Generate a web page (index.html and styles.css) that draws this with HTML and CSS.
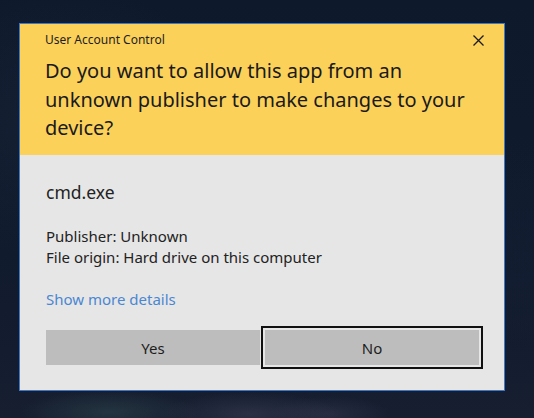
FILE: index.html
```html
<!DOCTYPE html>
<html lang="en">
<head>
<meta charset="utf-8">
<title>User Account Control</title>
<link rel="stylesheet" href="styles.css">
</head>
<body>
<div class="desktop">
  <div class="dialog">
    <div class="header">
      <div class="title-row">
        <span class="title">User Account Control</span>
        <svg class="close" width="11" height="11" viewBox="0 0 11 11" aria-hidden="true">
          <path d="M0.5 0.5 L10.5 10.5 M10.5 0.5 L0.5 10.5" stroke="#1a1a1a" stroke-width="1.3" fill="none"/>
        </svg>
      </div>
      <h1 class="question">Do you want to allow this app from an unknown publisher to make changes to your device?</h1>
    </div>
    <div class="body">
      <div class="app-name">cmd.exe</div>
      <div class="info">
        <div>Publisher: Unknown</div>
        <div>File origin: Hard drive on this computer</div>
      </div>
      <a class="details" href="#">Show more details</a>
      <div class="buttons">
        <button class="btn">Yes</button>
        <button class="btn btn-focus">No</button>
      </div>
    </div>
  </div>
</div>
</body>
</html>
```
FILE: styles.css
```css
html, body {
  margin: 0;
  padding: 0;
}
body {
  width: 534px;
  height: 418px;
  overflow: hidden;
  font-family: "Noto Sans", "Open Sans", sans-serif;
}
.desktop {
  width: 534px;
  height: 418px;
  padding: 23px 0 0 19px;
  box-sizing: border-box;
  background:
    radial-gradient(ellipse 90px 22px at 110px 412px, rgba(50, 75, 80, 0.5), transparent),
    radial-gradient(ellipse 90px 22px at 250px 414px, rgba(70, 70, 95, 0.45), transparent),
    radial-gradient(ellipse 60px 18px at 330px 414px, rgba(65, 65, 90, 0.4), transparent),
    radial-gradient(ellipse 160px 140px at 60px 120px, rgba(28, 38, 58, 0.5), transparent),
    radial-gradient(ellipse 140px 120px at 520px 260px, rgba(20, 30, 50, 0.6), transparent),
    linear-gradient(180deg, #0f192c 0%, #111b2e 60%, #161e30 100%);
}
.dialog {
  width: 484px;
  border: 1px solid #3f78c6;
  background: #e6e6e6;
}
.header {
  background: #fcd15a;
  height: 131px;
  box-sizing: border-box;
  padding: 8px 19px 0 25px;
}
.title-row {
  display: flex;
  justify-content: space-between;
  align-items: center;
  height: 16px;
}
.title {
  font-size: 12px;
  line-height: 16px;
  color: #1e1e1e;
}
.close {
  display: block;
  margin-right: 1px;
}
.question {
  margin: 9px 0 0 0;
  padding-right: 8px;
  font-size: 20px;
  font-weight: normal;
  line-height: 28.5px;
  color: #1a1a1a;
}
.body {
  padding: 25px 25px 25px 26px;
  color: #222;
}
.app-name {
  font-size: 17.5px;
  line-height: 24px;
}
.info {
  margin-top: 22px;
  font-size: 15px;
  line-height: 21px;
}
.details {
  display: block;
  margin-top: 21px;
  font-size: 15px;
  line-height: 21px;
  color: #4a87d2;
  text-decoration: none;
}
.buttons {
  margin-top: 20px;
  display: flex;
  gap: 5px;
}
.btn {
  flex: 1;
  height: 35px;
  border: none;
  background: #bdbdbd;
  font-family: inherit;
  font-size: 15px;
  color: #1e1e1e;
  padding: 0;
}
.btn-focus {
  outline: 2px solid #111;
  outline-offset: 2px;
}
```
